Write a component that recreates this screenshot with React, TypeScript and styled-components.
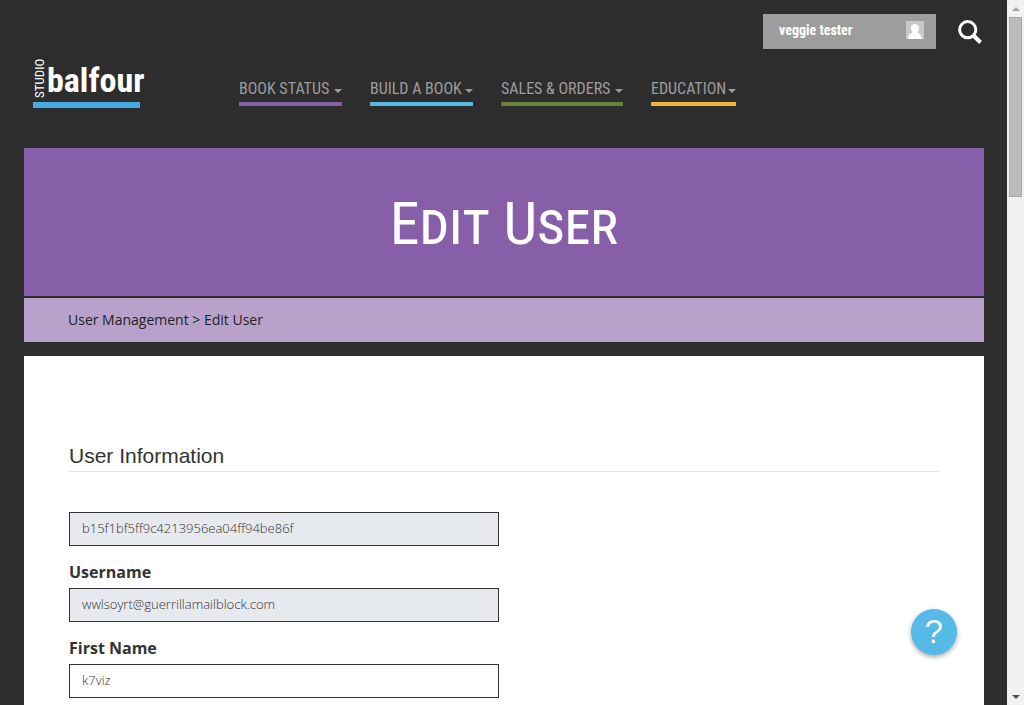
import React from "react";
import styled, { createGlobalStyle } from "styled-components";

const narrow = `"Liberation Sans Narrow", "Roboto Condensed", "Arial Narrow", sans-serif`;
const body = `"Open Sans", "Noto Sans", sans-serif`;

const GlobalStyle = createGlobalStyle`
  *, *::before, *::after { box-sizing: border-box; }
  body { margin: 0; background: #2d2d2d; color: #333; font-family: ${body}; }
`;

const Shell = styled.div`
  display: flex;
  height: 100vh;
  overflow: hidden;
`;

const Page = styled.div`
  flex: 1;
  min-width: 0;
  display: flex;
  flex-direction: column;
  padding: 0 23px 0 24px;
  overflow: hidden;
`;

const Header = styled.header`
  flex: none;
  height: 148px;
`;

const Account = styled.div`
  display: flex;
  justify-content: flex-end;
  align-items: flex-start;
  gap: 20px;
  height: 56px;
  padding-top: 14px;
`;

const UserButton = styled.button`
  display: flex;
  justify-content: space-between;
  align-items: center;
  width: 173px;
  height: 35px;
  padding: 0 12px 4px 16px;
  border: 0;
  background: #9d9d9d;
  color: #fff;
  font: bold 14px/20px ${narrow};
`;

const SearchButton = styled.button`
  width: 28px;
  height: 35px;
  padding: 4px 0 0;
  border: 0;
  background: none;
`;

const NavBar = styled.div`
  display: flex;
  align-items: flex-start;
  padding-left: 9px;
`;

const Logo = styled.a`
  display: grid;
  grid-template-columns: 14px auto;
  width: 107px;
  height: 52px;
  margin-right: 99px;
  border-bottom: 6px solid #46aae6;
  color: #fff;
  text-decoration: none;
`;

const LogoSide = styled.span`
  writing-mode: vertical-rl;
  transform: rotate(180deg);
  height: 42px;
  font: 13px/14px ${narrow};
`;

const LogoName = styled.span`
  font: bold 34px/48px ${narrow};
`;

const Menu = styled.nav`
  display: flex;
  gap: 28px;
  padding-top: 20px;
`;

const MenuButton = styled.button<{ $line: string; $width: number }>`
  display: flex;
  justify-content: space-between;
  align-items: center;
  width: ${(p) => p.$width}px;
  height: 30px;
  padding: 0;
  border: 0;
  border-bottom: 4px solid ${(p) => p.$line};
  background: none;
  color: #9d9d9d;
  font: 16px/24px ${narrow};
  white-space: nowrap;
`;

const Caret = styled.span`
  margin-top: 4px;
  border: 4px solid transparent;
  border-top-color: currentColor;
  border-bottom: 0;
`;

const Banner = styled.div`
  flex: none;
  display: flex;
  justify-content: center;
  align-items: center;
  height: 148px;
  background: #875fa8;
`;

const Title = styled.h1`
  margin: 0;
  padding-top: 4px;
  color: #fff;
  font: normal small-caps 60px/80px ${narrow};
`;

const Crumbs = styled.nav`
  flex: none;
  height: 44px;
  margin: 2px 0 14px;
  padding: 0 44px;
  background: #b8a2cc;
  color: #222;
  font: 14px/44px ${body};
`;

const CrumbLink = styled.a`
  color: inherit;
  text-decoration: none;
`;

const Main = styled.main`
  flex: 1;
  padding: 85px 45px 0;
  background: #fff;
`;

const SectionTitle = styled.h2`
  margin: 0 0 40px;
  border-bottom: 1px solid #e5e5e5;
  font: 21px/30px "Liberation Sans", Arial, sans-serif;
`;

const Field = styled.div`
  width: 430px;
  max-width: 100%;
  margin-bottom: 14px;
`;

const Label = styled.label`
  display: block;
  height: 28px;
  font: bold 16px/24px ${body};
`;

const TextBox = styled.input`
  display: block;
  width: 100%;
  height: 34px;
  padding: 0 12px 2px;
  border: 1px solid #333;
  border-radius: 0;
  background: #fff;
  color: #333;
  font: 300 13px/20px ${body};
  &:read-only { background: #e6e9ee; }
`;

const HelpButton = styled.button`
  position: fixed;
  right: 67px;
  bottom: 50px;
  width: 46px;
  height: 46px;
  padding: 0;
  border: 0;
  border-radius: 50%;
  background: #56bae6;
  box-shadow: 0 2px 5px rgba(0, 0, 0, 0.35);
  color: #fff;
  font: 33px/46px "Liberation Sans", Arial, sans-serif;
`;

const ScrollTrack = styled.div`
  flex: none;
  display: flex;
  flex-direction: column;
  align-items: center;
  width: 17px;
  background: #f1f1f1;
`;

const ScrollArrow = styled.span<{ $down?: boolean }>`
  display: grid;
  place-items: center;
  height: 17px;
  &::before {
    content: "";
    border: 4px solid transparent;
    ${(p) => (p.$down ? "border-top-color: #505050; border-bottom: 0;" : "border-bottom-color: #a3a3a3; border-top: 0;")}
  }
`;

const ScrollThumb = styled.div`
  width: 13px;
  height: 180px;
  margin-bottom: auto;
  border: 1px solid #a8a8a8;
  background: #bcbcbc;
`;

const menus = [
  { name: "BOOK STATUS", line: "#875fa8", width: 103 },
  { name: "BUILD A BOOK", line: "#56bae6", width: 103 },
  { name: "SALES & ORDERS", line: "#69833d", width: 122 },
  { name: "EDUCATION", line: "#f9b036", width: 85 },
];

export default function App() {
  return (
    <Shell>
      <GlobalStyle />
      <Page>
        <Header>
          <Account>
            <UserButton type="button">
              veggie tester
              <svg width="18" height="18" viewBox="0 0 18 18" aria-hidden="true">
                <path fill="#c9c9c9" d="M0 0h18v18H0z" />
                <path fill="#fff" d="M9 3c-2.600 0-4 1.800-4 4.200 0 1.700.6 3 1.500 3.800-.2 1.300-4 1.400-4.500 7h14c-.5-5.600-4.300-5.700-4.500-7 .9-.8 1.500-2.100 1.500-3.800C13 4.800 11.600 3 9 3z" />
              </svg>
            </UserButton>
            <SearchButton type="button" aria-label="Search">
              <svg width="24" height="24" viewBox="0 0 24 24" fill="none" stroke="#fff" aria-hidden="true">
                <circle cx="9.700" cy="9.700" r="8.100" strokeWidth="3" />
                <path d="m15.500 15.500 7 7" strokeWidth="4" />
              </svg>
            </SearchButton>
          </Account>
          <NavBar>
            <Logo href="#">
              <LogoSide>STUDIO</LogoSide>
              <LogoName>balfour</LogoName>
            </Logo>
            <Menu>
              {menus.map((m) => (
                <MenuButton key={m.name} type="button" $line={m.line} $width={m.width}>
                  {m.name}
                  <Caret />
                </MenuButton>
              ))}
            </Menu>
          </NavBar>
        </Header>
        <Banner>
          <Title>Edit User</Title>
        </Banner>
        <Crumbs>
          <CrumbLink href="#">User Management</CrumbLink> &gt; Edit User
        </Crumbs>
        <Main>
          <SectionTitle>User Information</SectionTitle>
          <Field>
            <TextBox readOnly aria-label="User ID" defaultValue="b15f1bf5ff9c4213956ea04ff94be86f" />
          </Field>
          <Field>
            <Label htmlFor="username">Username</Label>
            <TextBox id="username" readOnly defaultValue="wwlsoyrt@guerrillamailblock.com" />
          </Field>
          <Field>
            <Label htmlFor="first-name">First Name</Label>
            <TextBox id="first-name" defaultValue="k7viz" />
          </Field>
        </Main>
      </Page>
      <ScrollTrack aria-hidden="true">
        <ScrollArrow />
        <ScrollThumb />
        <ScrollArrow $down />
      </ScrollTrack>
      <HelpButton type="button" aria-label="Help">?</HelpButton>
    </Shell>
  );
}
